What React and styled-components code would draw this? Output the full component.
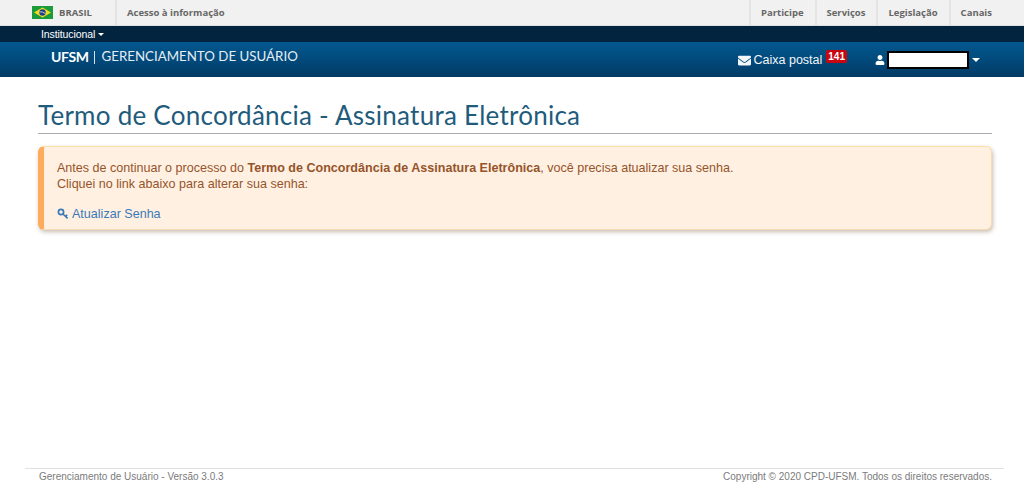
import React from 'react';
import styled, { createGlobalStyle } from 'styled-components';
import { FaEnvelope, FaUser } from 'react-icons/fa';

const GlobalStyle = createGlobalStyle`
  html, body {
    margin: 0;
    padding: 0;
    height: 100%;
    background: #fff;
  }
  #root {
    height: 100%;
  }
`;

const Page = styled.div`
  height: 500px;
  display: flex;
  flex-direction: column;
  font-family: "Liberation Sans", Arial, sans-serif;
  overflow: hidden;
`;

const GovBar = styled.div`
  height: 25px;
  display: flex;
  justify-content: space-between;
  background: #f1f1f1;
  border-bottom: 1px solid #dfdfdf;
  font-family: "Open Sans", sans-serif;
  font-size: 9.5px;
  font-weight: 700;
  color: #666;
`;

const GovGroup = styled.div`
  display: flex;
`;

const CountryCell = styled.div`
  width: 117px;
  box-sizing: border-box;
  padding-left: 32px;
  display: flex;
  align-items: center;
  gap: 6px;
  border-right: 2px solid #e4e4e4;
`;

const GovLink = styled.div`
  display: flex;
  align-items: center;
  padding: 0 ${(p) => p.$right || 11}px 0 10px;
  border-left: ${(p) => (p.$plain ? 'none' : '2px solid #e4e4e4')};
`;

const InstitutionalBar = styled.div`
  height: 16px;
  background: #02243f;
  color: #fff;
  padding-left: 41px;
  display: flex;
  align-items: center;
  gap: 3px;
  font-size: 10.5px;
  letter-spacing: -0.1px;
`;

const Caret = styled.span`
  width: 0;
  height: 0;
  border-left: ${(p) => p.$size}px solid transparent;
  border-right: ${(p) => p.$size}px solid transparent;
  border-top: ${(p) => p.$size}px solid #fff;
`;

const Header = styled.div`
  height: 35px;
  display: flex;
  justify-content: space-between;
  background: linear-gradient(to bottom, #02588f 0%, #024a7c 50%, #023a64 100%);
  color: #fff;
`;

const Brand = styled.div`
  padding: 6px 0 0 51px;
  display: flex;
  align-items: flex-start;
  font-family: "Lato", sans-serif;
  line-height: 17px;
`;

const BrandName = styled.strong`
  font-size: 14px;
  font-weight: 700;
  letter-spacing: -0.4px;
`;

const BrandDivider = styled.span`
  width: 1px;
  height: 13px;
  margin: 3px 7px 0 5px;
  background: #d5e2ec;
`;

const BrandTitle = styled.span`
  color: #e6eef4;
  font-size: 13.3px;
`;

const UserArea = styled.div`
  display: flex;
  align-items: flex-start;
  padding-right: 44px;
`;

const Mailbox = styled.div`
  display: flex;
  align-items: center;
  gap: 3px;
  margin-top: 10px;
  font-size: 12.5px;
  line-height: 16px;
  color: #f2f6f9;
  svg {
    width: 13px;
    height: 13px;
    margin-top: 1px;
  }
`;

const Badge = styled.span`
  align-self: flex-start;
  margin: -2px 0 0 1px;
  padding: 0 2px;
  background: #c9060f;
  border-radius: 2px;
  color: #fff;
  font-size: 10px;
  font-weight: 700;
  line-height: 13px;
`;

const UserMenu = styled.div`
  display: flex;
  align-items: center;
  margin: 9px 0 0 28px;
  svg {
    width: 10px;
    height: 10px;
    margin-right: 2px;
  }
`;

const Redacted = styled.div`
  width: 78px;
  height: 14px;
  margin-right: 3px;
  background: #fff;
  border: 2px solid #000;
`;

const Content = styled.main`
  flex: 1;
  padding: 22px 32px 0 38px;
`;

const Title = styled.h1`
  margin: 0;
  height: 34px;
  border-bottom: 1px solid #a9adb2;
  font-family: "Lato", sans-serif;
  font-size: 26px;
  font-weight: 400;
  line-height: 32px;
  letter-spacing: 0.25px;
  color: #1f5c7c;
`;

const Alert = styled.div`
  height: 84px;
  margin-top: 12px;
  box-sizing: border-box;
  padding: 13px 14px 0 13px;
  background: #fff0e2;
  border: 1px solid #f6dcb4;
  border-top-color: #f9e0a4;
  border-left: 6px solid #fdab5c;
  border-radius: 6px;
  box-shadow: 1px 2px 4px rgba(120, 90, 60, 0.4);
  font-size: 12.55px;
  line-height: 16px;
  color: #95542a;
`;

const AlertLine = styled.div`
  min-height: 16px;
`;

const ActionLink = styled.a`
  display: inline-flex;
  align-items: center;
  gap: 3px;
  margin-top: 14px;
  color: #3a7ab6;
  svg {
    width: 12px;
    height: 12px;
  }
`;

const Footer = styled.footer`
  height: 30px;
  margin: 0 20px 0 25px;
  padding: 1px 12px 0 14px;
  display: flex;
  justify-content: space-between;
  border-top: 1px solid #e1e1e1;
  font-size: 10px;
  line-height: 13px;
  color: #7b7b7b;
`;

const BrazilFlag = () => (
  <svg width="21" height="13" viewBox="0 0 21 13">
    <rect width="21" height="13" fill="#1c9b3c" />
    <polygon points="10.5,1.5 19,6.5 10.5,11.5 2,6.5" fill="#f5dc1e" />
    <circle cx="10.5" cy="6.5" r="3.2" fill="#1d3f8c" />
    <path d="M7.5 5.8 Q10.5 5.4 13.4 7.6" stroke="#fff" strokeWidth="0.7" fill="none" />
  </svg>
);

const KeyIcon = () => (
  <svg viewBox="0 0 12 12" fill="none" stroke="currentColor">
    <circle cx="4" cy="4" r="2.6" strokeWidth="1.7" />
    <path d="M6 6 L10.6 10.4 M8.6 8.4 L10.2 6.9" strokeWidth="1.6" />
  </svg>
);

export default function App() {
  return (
    <Page>
      <GlobalStyle />
      <GovBar>
        <GovGroup>
          <CountryCell>
            <BrazilFlag />
            BRASIL
          </CountryCell>
          <GovLink $plain>Acesso à informação</GovLink>
        </GovGroup>
        <GovGroup>
          <GovLink>Participe</GovLink>
          <GovLink>Serviços</GovLink>
          <GovLink>Legislação</GovLink>
          <GovLink $right={32}>Canais</GovLink>
        </GovGroup>
      </GovBar>
      <InstitutionalBar>
        Institucional <Caret $size={3} />
      </InstitutionalBar>
      <Header>
        <Brand>
          <BrandName>UFSM</BrandName>
          <BrandDivider />
          <BrandTitle>GERENCIAMENTO DE USUÁRIO</BrandTitle>
        </Brand>
        <UserArea>
          <Mailbox>
            <FaEnvelope />
            Caixa postal
            <Badge>141</Badge>
          </Mailbox>
          <UserMenu>
            <FaUser />
            <Redacted />
            <Caret $size={4} />
          </UserMenu>
        </UserArea>
      </Header>
      <Content>
        <Title>Termo de Concordância - Assinatura Eletrônica</Title>
        <Alert>
          <AlertLine>
            Antes de continuar o processo do <strong>Termo de Concordância de Assinatura Eletrônica</strong>, você precisa atualizar sua senha.
          </AlertLine>
          <AlertLine>Cliquei no link abaixo para alterar sua senha:</AlertLine>
          <ActionLink>
            <KeyIcon />
            Atualizar Senha
          </ActionLink>
        </Alert>
      </Content>
      <Footer>
        <span>Gerenciamento de Usuário - Versão 3.0.3</span>
        <span>Copyright © 2020 CPD-UFSM. Todos os direitos reservados.</span>
      </Footer>
    </Page>
  );
}
